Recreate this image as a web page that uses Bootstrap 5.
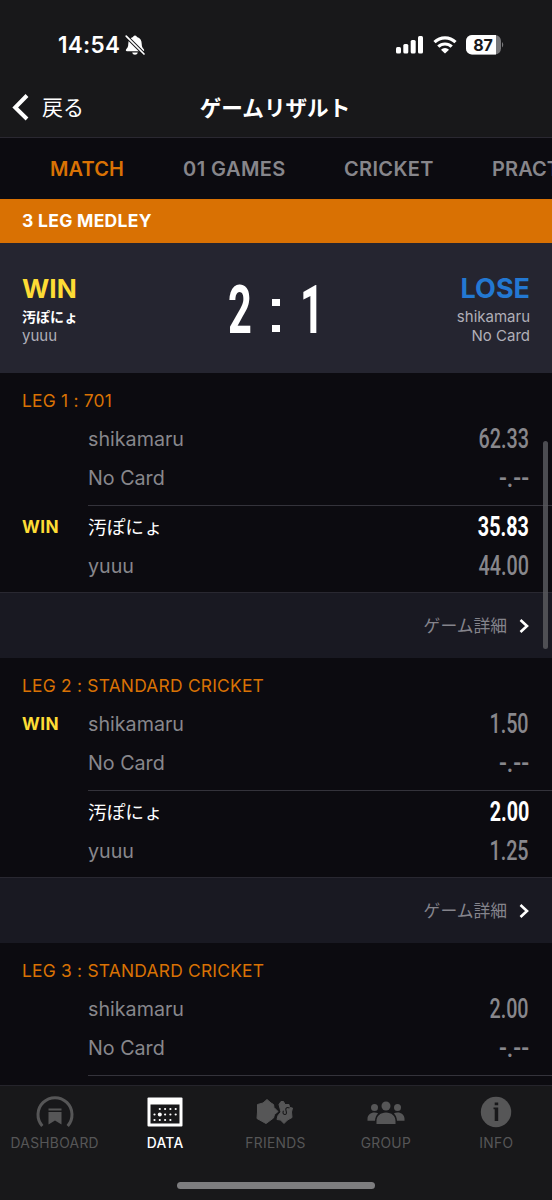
<!DOCTYPE html>
<html lang="ja">
<head>
<meta charset="utf-8">
<meta name="viewport" content="width=device-width, initial-scale=1">
<title>ゲームリザルト</title>
<link href="https://cdn.jsdelivr.net/npm/bootstrap@5.3.0/dist/css/bootstrap.min.css" rel="stylesheet">
<style>
body{background:#0c0b10;font-family:Inter,"Noto Sans CJK JP",sans-serif;color:#fff;height:1200px;overflow:hidden;line-height:1}
svg{display:block;flex:none}
.app{height:1200px}
.top{background:#18181a;height:138px;border-bottom:1px solid #2a2831}
.status{height:77px;padding:13px 48px 0 58px}
.clock{font-size:22.5px;font-weight:600;letter-spacing:.3px}
.sys-icon{margin-left:9px}
.title-row{height:60px;padding:0 12px}
.back{font-size:21px;line-height:28px;padding-top:2px}
.page-title{font-size:21.6px;font-weight:700;line-height:30px;padding-top:1px;padding-right:2px;white-space:nowrap}
.tabs{height:61px;padding-left:50px;font-size:20px;font-weight:600;color:#87868b;white-space:nowrap;overflow:hidden;letter-spacing:.1px}
.tabs span{flex:none}
.t1{width:133px}.t2{width:161px;letter-spacing:.45px}.t3{width:148px;letter-spacing:.35px}
.orange{color:#d97204}
.band{background:#d97103;height:44px;padding:0 22px;font-size:17.5px;font-weight:700;letter-spacing:.3px}
.score{background:#252530;height:130px;padding:30px 22px 0}
.result{font-size:27px;font-weight:700;line-height:32px;margin-bottom:3px}
.result.yellow{font-size:26.3px;line-height:31px;margin-bottom:4px}
.yellow{color:#fddc35}.blue{color:#2378d2}
.who{font-size:15px;line-height:18.5px;color:#b0afb8}
.who b{color:#fff;font-size:14px;font-weight:700}
.big{width:94px;height:48px;font:700 67px/48px Roboto,sans-serif;margin-top:13px}
.big span{display:flex;justify-content:center;width:22px;transform:scaleX(.62)}
.big .dots{transform:none;flex-direction:column;justify-content:space-between;align-items:center;height:33px;margin-top:13px}
.dots i{width:8px;height:7px;background:#fff}
.leg-title{height:47px;padding:10px 22px 0;font-size:17.4px;line-height:36px;font-weight:400;letter-spacing:.22px}
.pair{margin-left:88px;padding-right:23px;height:85px}
.pair + .pair{border-top:1px solid #34333b;height:87px;padding-top:2px}
.player{height:38.7px;color:#88878c;font-size:19.7px;position:relative}
.player > span:not(.num):not(.win){padding-top:2px}
.player.hot{color:#fff}
.jp{font-size:18.7px}
.win{position:absolute;left:-66px;font-size:17.2px;font-weight:700;letter-spacing:.4px;top:10px}
.num{font:500 27px/36px Roboto,sans-serif;transform:scaleX(.73);transform-origin:right}
.num.none{transform:scaleX(.86)}
.hot .num{font-weight:700}
.more{background:#191922;border-top:1px solid #292831;height:66px;padding:0 23px;color:#85848c;font-size:16.8px;gap:12px}
.more span{padding-top:1px}
.scrollbar-thumb{position:absolute;left:543px;top:441px;width:5px;height:208px;border-radius:3px;background:#5d5c62cc}
.legs{height:712px;overflow:hidden}
.bottom{background:#18181a;border-top:1px solid #25242b;height:115px;position:relative}
.tab-item{width:110.4px;padding-right:1px;color:#565657;font-size:13.8px;letter-spacing:.3px}
.tab-item.on{color:#fff;font-weight:500}
.tab-item svg{height:40px;width:44px;margin:6px 0 5px}
.home{position:absolute;left:177px;bottom:11px;width:198px;height:7px;border-radius:4px;background:#7d7d7f}
</style>
</head>
<body>
<div class="app d-flex flex-column">
<header class="top">
  <div class="status d-flex align-items-center">
    <span class="clock">14:54</span>
    <svg width="22" height="22" viewBox="0 0 22 22" class="ms-1"><path d="M11 1.500a2 2 0 0 1 2 1.500c3.300 1 4.700 3.500 4.700 6.800 0 3.300 1 4.300 2.100 5.500.8.900.3 1.900-.8 1.900H3c-1.100 0-1.600-1-.8-1.900 1.100-1.200 2.100-2.200 2.100-5.500C4.300 6.500 5.700 4 9 3a2 2 0 0 1 2-1.500zM8.200 18.500h5.600c-.4 1.500-1.400 2.200-2.800 2.200s-2.400-.7-2.800-2.200z" fill="#fff"/><path d="M2.500 2.500 20 20" stroke="#18181a" stroke-width="3.800"/><path d="M2.200 2.200 20 20" stroke="#fff" stroke-width="1.700" stroke-linecap="round"/></svg>
    <svg class="ms-auto" width="28" height="18" viewBox="0 0 28 18" fill="#fff"><rect x="0" y="11" width="5" height="6.500" rx="1.500"/><rect x="7.300" y="8" width="5" height="9.500" rx="1.500"/><rect x="14.700" y="4" width="5" height="13.500" rx="1.500"/><rect x="22" y="0" width="5" height="17.500" rx="1.500"/></svg>
    <svg class="sys-icon" width="24" height="18" viewBox="0 0 24 18" fill="none" stroke="#fff" stroke-width="3.200"><path d="M1.500 6.200a15 15 0 0 1 21 0M5.300 10.700a9.700 9.700 0 0 1 13.400 0"/><path d="M12 17.500 8 13.800a5.600 5.600 0 0 1 8 0z" fill="#fff" stroke="none"/></svg>
    <svg class="sys-icon" width="38" height="20" viewBox="0 0 38 20"><rect width="35" height="19.500" rx="6" fill="#77777a"/><path d="M6 0h24v19.500H6a6 6 0 0 1-6-6V6a6 6 0 0 1 6-6z" fill="#fff"/><path d="M36 7q2.500 2.700 0 5.500z" fill="#77777a"/><text x="17" y="15.500" text-anchor="middle" font-size="16" font-weight="700" fill="#18181a">87</text></svg>
  </div>
  <div class="title-row d-flex align-items-center position-relative">
    <svg width="18" height="28" viewBox="0 0 18 28" fill="none" stroke="#fff" stroke-width="4"><path d="M15 2.500 3.200 14.500 15 26"/></svg>
    <span class="back ms-2 ps-1">戻る</span>
    <span class="page-title position-absolute start-50 translate-middle-x">ゲームリザルト</span>
  </div>
</header>
<nav class="tabs d-flex align-items-center">
  <span class="t1 orange">MATCH</span><span class="t2">01 GAMES</span><span class="t3">CRICKET</span><span>PRACTICE</span>
</nav>
<div class="band d-flex align-items-center">3 LEG MEDLEY</div>
<section class="score d-flex justify-content-between">
  <div class="w-25"><div class="result yellow">WIN</div><div class="who"><b>汚ぽにょ</b><br>yuuu</div></div>
  <div class="big d-flex justify-content-between"><span>2</span><span class="dots"><i></i><i></i></span><span>1</span></div>
  <div class="w-25 text-end"><div class="result blue">LOSE</div><div class="who">shikamaru<br>No Card</div></div>
</section>
<main class="legs">
  <section>
    <div class="leg-title orange">LEG 1 : 701</div>
    <div class="pair">
      <div class="player d-flex align-items-center justify-content-between"><span>shikamaru</span><span class="num">62.33</span></div>
      <div class="player d-flex align-items-center justify-content-between"><span>No Card</span><span class="num none">-.--</span></div>
    </div>
    <div class="pair">
      <div class="player hot d-flex align-items-center justify-content-between"><span class="win yellow">WIN</span><span class="jp">汚ぽにょ</span><span class="num">35.83</span></div>
      <div class="player d-flex align-items-center justify-content-between"><span>yuuu</span><span class="num">44.00</span></div>
    </div>
    <div class="more d-flex align-items-center justify-content-end"><span>ゲーム詳細</span><svg width="10" height="16" viewBox="0 0 10 16" fill="none" stroke="#fff" stroke-width="2.600"><path d="m1.500 2 6.500 6-6.500 6"/></svg></div>
  </section>
  <section>
    <div class="leg-title orange">LEG 2 : STANDARD CRICKET</div>
    <div class="pair">
      <div class="player d-flex align-items-center justify-content-between"><span class="win yellow">WIN</span><span>shikamaru</span><span class="num">1.50</span></div>
      <div class="player d-flex align-items-center justify-content-between"><span>No Card</span><span class="num none">-.--</span></div>
    </div>
    <div class="pair">
      <div class="player hot d-flex align-items-center justify-content-between"><span class="jp">汚ぽにょ</span><span class="num">2.00</span></div>
      <div class="player d-flex align-items-center justify-content-between"><span>yuuu</span><span class="num">1.25</span></div>
    </div>
    <div class="more d-flex align-items-center justify-content-end"><span>ゲーム詳細</span><svg width="10" height="16" viewBox="0 0 10 16" fill="none" stroke="#fff" stroke-width="2.600"><path d="m1.500 2 6.500 6-6.500 6"/></svg></div>
  </section>
  <section>
    <div class="leg-title orange">LEG 3 : STANDARD CRICKET</div>
    <div class="pair">
      <div class="player d-flex align-items-center justify-content-between"><span>shikamaru</span><span class="num">2.00</span></div>
      <div class="player d-flex align-items-center justify-content-between"><span>No Card</span><span class="num none">-.--</span></div>
    </div>
    <div class="pair"></div>
  </section>
</main>
<footer class="bottom d-flex align-items-start">
  <div class="tab-item d-flex flex-column align-items-center"><svg viewBox="0 0 44 40" fill="none"><path d="M9.300 34A17 17 0 1 1 34.700 34" stroke="#565657" stroke-width="3"/><path d="M15.500 16.500h13v2h-13zM15.500 20h13v12.500L22 28.500l-6.500 4z" fill="#565657"/></svg>DASHBOARD</div>
  <div class="tab-item on d-flex flex-column align-items-center"><svg viewBox="0 0 44 40"><rect x="4.500" y="5.500" width="35" height="29" rx="1" fill="#fff"/><path d="M7.500 12.500h29v19h-29z" fill="#18181a"/><path d="M16.800 17h16.500M11.500 22.500h22M11.500 28h16.500" stroke="#fff" stroke-width="2.200" stroke-linecap="round" stroke-dasharray="0 5.300"/><circle cx="16.800" cy="22.500" r="2" fill="#fff"/></svg>DATA</div>
  <div class="tab-item d-flex flex-column align-items-center"><svg viewBox="0 0 44 40" fill="#565657" stroke-linejoin="round"><path d="M26 12.500 28 9.500 30.500 9.500 32 12.500 36 12.500 36.500 15.500 39.500 16 38.500 20 39 25.500 34.500 28 31 31.500 27.500 28 24 27.500 25 23.500 28 20z" stroke="#565657" stroke-width="1"/><path d="M4.500 12.500 10 11 14 7.500 18 11 20.500 12.500 21 15.500 25 19.500 21.500 22.500 20.500 26 13 31.500 4 26.500 4.500 20z" stroke="#18181a" stroke-width="3.200"/><path d="M4.500 12.500 10 11 14 7.500 18 11 20.500 12.500 21 15.500 25 19.500 21.500 22.500 20.500 26 13 31.500 4 26.500 4.500 20z" stroke="#565657" stroke-width="1"/><path d="M36.500 16c-2-1.200-4-.3-3.700 1.800.5 1.800 1.500 4.200-.6 4.700-2.200.4-2.700-2-1.700-3.700" fill="none" stroke="#18181a" stroke-width="1.100"/></svg>FRIENDS</div>
  <div class="tab-item d-flex flex-column align-items-center"><svg viewBox="0 0 44 40" fill="#565657"><circle cx="22" cy="14" r="4.500"/><circle cx="10.500" cy="15.500" r="3.500"/><circle cx="33.500" cy="15.500" r="3.500"/><path d="M12.500 32v-3c0-5 4-8.500 9.500-8.500s9.500 3.500 9.500 8.500v3zM3.500 28.800v-2C3.500 23 6.500 20.500 10.500 20.500c1.500 0 2.700.3 3.700.9-1.900 1.600-3 4-3.200 7.400zM40.500 28.800v-2c0-3.800-3-6.300-7-6.300-1.500 0-2.700.3-3.700.9 1.900 1.600 3 4 3.200 7.400z"/></svg>GROUP</div>
  <div class="tab-item d-flex flex-column align-items-center"><svg viewBox="0 0 44 40"><circle cx="22" cy="20" r="15.200" fill="#565657"/><path d="M20.700 10.500h3.500v2.800h-3.500zM19.500 15.500h4.700v13.500h-3.500V17.200h-1.200z" fill="#18181a"/></svg>INFO</div>
  <div class="home"></div>
</footer>
</div>
<div class="scrollbar-thumb"></div>
</body>
</html>
